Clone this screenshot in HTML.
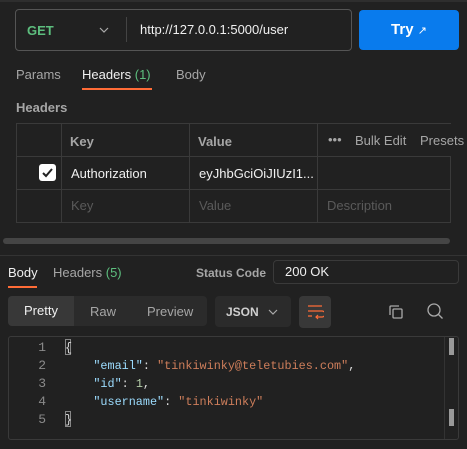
<!DOCTYPE html>
<html><head><style>
*{margin:0;padding:0;box-sizing:border-box}
body{width:467px;height:449px;background:#212121;font-family:"Liberation Sans",sans-serif;font-size:13px;color:#e6e6e6;position:relative;overflow:hidden}
.a{position:absolute;white-space:nowrap}
.g{color:#a6a6a6}
.m{font-family:"Liberation Mono",monospace;font-size:11.8px}
</style></head><body>
<div class="a" style="left:0;top:0;width:467px;height:2px;background:#2e2e2e"></div>
<div class="a" style="left:15px;top:9px;width:337px;height:42px;border:1px solid #555;border-radius:4px"></div>
<div class="a" style="left:27px;top:23px;color:#5dbe7e;font-weight:bold">GET</div>
<svg class="a" style="left:99px;top:27px" width="10" height="6"><path d="M1 1l4 4 4-4" fill="none" stroke="#aaa" stroke-width="1.2"/></svg>
<div class="a" style="left:126px;top:17px;width:1px;height:25px;background:#444"></div>
<div class="a" style="left:140px;top:22px;color:#f0f0f0">http://127.0.0.1:5000/user</div>
<div class="a" style="left:359px;top:10px;width:100px;height:40px;background:#097bed;border-radius:4px;color:#fff;font-weight:bold;font-size:15px;text-align:center;line-height:40px">Try <span style="font-size:11px;font-weight:normal">↗</span></div>
<div class="a g" style="left:16px;top:67px">Params</div>
<div class="a" style="left:82px;top:67px;color:#f0f0f0">Headers <span style="color:#5dbe7e">(1)</span></div>
<div class="a g" style="left:176px;top:67px">Body</div>
<div class="a" style="left:82px;top:88px;width:70px;height:2px;background:#ff6c37"></div>
<div class="a g" style="left:16px;top:100px;font-weight:bold">Headers</div>
<div class="a" style="left:16px;top:123px;width:435px;height:1px;background:#3a3a3a"></div>
<div class="a" style="left:16px;top:156px;width:435px;height:1px;background:#3a3a3a"></div>
<div class="a" style="left:16px;top:189px;width:435px;height:1px;background:#3a3a3a"></div>
<div class="a" style="left:16px;top:222px;width:435px;height:1px;background:#3a3a3a"></div>
<div class="a" style="left:16px;top:123px;width:1px;height:100px;background:#3a3a3a"></div>
<div class="a" style="left:61px;top:123px;width:1px;height:100px;background:#3a3a3a"></div>
<div class="a" style="left:189px;top:123px;width:1px;height:100px;background:#3a3a3a"></div>
<div class="a" style="left:317px;top:123px;width:1px;height:100px;background:#3a3a3a"></div>
<div class="a" style="left:450px;top:156px;width:1px;height:67px;background:#3a3a3a"></div>
<div class="a g" style="left:70px;top:134px;font-weight:bold">Key</div>
<div class="a g" style="left:198px;top:134px;font-weight:bold">Value</div>
<div class="a g" style="left:328px;top:132px">•••</div>
<div class="a g" style="left:355px;top:133px">Bulk Edit</div>
<div class="a g" style="left:420px;top:133px">Presets</div>
<div class="a" style="left:39px;top:164px;width:17px;height:17px;background:#fff;border-radius:3px"></div>
<svg class="a" style="left:39px;top:164px" width="17" height="17"><path d="M4 9l3 3 6-7" fill="none" stroke="#222" stroke-width="2"/></svg>
<div class="a" style="left:71px;top:166px;color:#f0f0f0">Authorization</div>
<div class="a" style="left:199px;top:166px;color:#f0f0f0">eyJhbGciOiJIUzI1...</div>
<div class="a" style="left:71px;top:198px;color:#5a5a5a">Key</div>
<div class="a" style="left:199px;top:198px;color:#5a5a5a">Value</div>
<div class="a" style="left:327px;top:198px;color:#5a5a5a">Description</div>
<div class="a" style="left:3px;top:238px;width:447px;height:6px;background:#454545;border-radius:3px"></div>
<div class="a" style="left:0;top:255px;width:467px;height:1px;background:#333"></div>
<div class="a" style="left:8px;top:265px;color:#f0f0f0">Body</div>
<div class="a" style="left:8px;top:286px;width:29px;height:2px;background:#ff6c37"></div>
<div class="a g" style="left:53px;top:265px">Headers <span style="color:#5dbe7e">(5)</span></div>
<div class="a g" style="left:196px;top:266px;font-weight:bold;font-size:12px">Status Code</div>
<div class="a" style="left:273px;top:260px;width:186px;height:24px;border:1px solid #3a3a3a;border-radius:4px;padding-left:11px;line-height:22px;color:#f0f0f0">200 OK</div>
<div class="a" style="left:8px;top:296px;width:199px;height:30px;background:#2b2b2b;border-radius:4px"></div>
<div class="a" style="left:8px;top:296px;width:66px;height:30px;background:#383838;border-radius:4px 0 0 4px;text-align:center;line-height:30px;color:#f0f0f0">Pretty</div>
<div class="a g" style="left:90px;top:304px">Raw</div>
<div class="a g" style="left:147px;top:304px">Preview</div>
<div class="a" style="left:215px;top:296px;width:76px;height:31px;background:#2b2b2b;border-radius:4px"></div>
<div class="a" style="left:226px;top:305px;color:#d0d0d0;font-weight:bold;font-size:12px">JSON</div>
<svg class="a" style="left:268px;top:309px" width="10" height="6"><path d="M1 1l4 4 4-4" fill="none" stroke="#aaa" stroke-width="1.2"/></svg>
<div class="a" style="left:299px;top:296px;width:32px;height:32px;background:#383838;border-radius:4px"></div>
<svg class="a" style="left:306px;top:303px" width="18" height="18"><path d="M2 3h14M2 8h14a3 3 0 0 1 0 6h-6M12 12l-2 2 2 2M2 13h4" fill="none" stroke="#ff6c37" stroke-width="1.2"/></svg>
<svg class="a" style="left:387px;top:303px" width="18" height="18"><rect x="6" y="6" width="9" height="9" rx="1" fill="none" stroke="#aaa" stroke-width="1.3"/><path d="M3 12V4a1 1 0 0 1 1-1h8" fill="none" stroke="#aaa" stroke-width="1.3"/></svg>
<svg class="a" style="left:426px;top:302px" width="18" height="18"><circle cx="8" cy="8" r="6" fill="none" stroke="#aaa" stroke-width="1.3"/><path d="M12.5 12.5l4 4" stroke="#aaa" stroke-width="1.3"/></svg>
<div class="a" style="left:8px;top:336px;width:451px;height:104px;border:1px solid #3a3a3a;border-radius:3px"></div>
<div class="a" style="left:444px;top:337px;width:1px;height:102px;background:#333"></div>
<div class="a" style="left:449px;top:338px;width:5px;height:17px;background:#999"></div>
<div class="a" style="left:449px;top:409px;width:5px;height:17px;background:#999"></div>
<div class="a m" style="left:20px;top:339px;width:26px;text-align:right;color:#8a8a8a;line-height:18px;font-size:13px">1<br>2<br>3<br>4<br>5</div>
<div class="a" style="left:65px;top:339px;width:6px;height:16px;border:1px solid #888"></div>
<div class="a" style="left:65px;top:411px;width:6px;height:16px;border:1px solid #888"></div>
<div class="a m" style="left:65px;top:339px;line-height:18px;color:#ddd">{<br>&nbsp;&nbsp;&nbsp;&nbsp;<span style="color:#9cdcfe">"email"</span>: <span style="color:#ce7e5b">"tinkiwinky@teletubies.com"</span>,<br>&nbsp;&nbsp;&nbsp;&nbsp;<span style="color:#9cdcfe">"id"</span>: <span style="color:#b5cea8">1</span>,<br>&nbsp;&nbsp;&nbsp;&nbsp;<span style="color:#9cdcfe">"username"</span>: <span style="color:#ce7e5b">"tinkiwinky"</span><br>}</div>
</body></html>
